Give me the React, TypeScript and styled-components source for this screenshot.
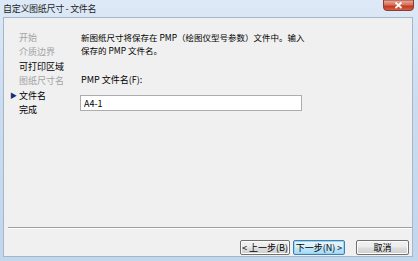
import React from "react";
import styled, { createGlobalStyle } from "styled-components";

const GlobalStyle = createGlobalStyle`
  html, body {
    margin: 0;
    padding: 0;
    background: #ffffff;
  }
  body {
    font-family: "Noto Sans CJK SC", "Liberation Sans", sans-serif;
  }
`;

interface Step {
  label: string;
  enabled: boolean;
  current?: boolean;
}

const steps: Step[] = [
  { label: "开始", enabled: false },
  { label: "介质边界", enabled: false },
  { label: "可打印区域", enabled: true },
  { label: "图纸尺寸名", enabled: false },
  { label: "文件名", enabled: true, current: true },
  { label: "完成", enabled: true },
];

const CloseIcon: React.FC = () => (
  <svg width="31" height="11" viewBox="0 0 31 11">
    <defs>
      <linearGradient id="closeGrad" x1="0" y1="0" x2="0" y2="1">
        <stop offset="0" stopColor="#eab3a2" />
        <stop offset="0.45" stopColor="#d8705a" />
        <stop offset="0.6" stopColor="#c43a22" />
        <stop offset="1" stopColor="#d4664e" />
      </linearGradient>
    </defs>
    <path d="M0.5 0 V7 Q0.5 10.5 4 10.5 H27 Q30.5 10.5 30.5 7 V0 Z" fill="url(#closeGrad)" stroke="#8e3b2e" />
    <path d="M12.5 2.5 L18.5 8 M18.5 2.5 L12.5 8" stroke="#ffffff" strokeWidth="1.7" />
  </svg>
);

const App: React.FC = () => {
  return (
    <>
      <GlobalStyle />
      <Window>
        <TitleBar>
          <Title>自定义图纸尺寸 - 文件名</Title>
          <CloseButton>
            <CloseIcon />
          </CloseButton>
        </TitleBar>
        <Client>
          <Body>
            <Nav>
              {steps.map((s) => (
                <NavItem key={s.label} $enabled={s.enabled}>
                  <Arrow>{s.current ? "▶" : ""}</Arrow>
                  {s.label}
                </NavItem>
              ))}
            </Nav>
            <Main>
              <Intro>
                <IntroLine>新图纸尺寸将保存在 PMP（绘图仪型号参数）文件中。输入</IntroLine>
                <IntroLine>保存的 PMP 文件名。</IntroLine>
              </Intro>
              <FieldLabel>PMP 文件名(F):</FieldLabel>
              <TextInput defaultValue="A4-1" />
            </Main>
          </Body>
          <Separator />
          <ButtonRow>
            <Button>&lt; 上一步(B)</Button>
            <Button $primary>下一步(N) &gt;</Button>
            <Button $wide>取消</Button>
          </ButtonRow>
        </Client>
      </Window>
    </>
  );
};

export default App;

const Window = styled.div`
  width: 418px;
  height: 261px;
  box-sizing: border-box;
  display: flex;
  flex-direction: column;
  background: linear-gradient(180deg, #dde9f6 0%, #cbdcef 40%, #c2d6ec 100%);
`;

const TitleBar = styled.div`
  height: 17px;
  display: flex;
  align-items: flex-start;
  justify-content: space-between;
  padding-left: 3px;
  padding-right: 4px;
`;

const Title = styled.div`
  font-size: 9px;
  line-height: 17px;
  color: #1e1e1e;
  letter-spacing: -0.3px;
`;

const CloseButton = styled.div`
  flex: 0 0 31px;
  height: 11px;
  line-height: 0;
`;

const Client = styled.div`
  flex: 1;
  margin: 0 5px 4px 3px;
  border: 1px solid #a6b6c9;
  background: #f0f0f0;
  display: flex;
  flex-direction: column;
`;

const Body = styled.div`
  flex: 1;
  display: grid;
  grid-template-columns: 77px 1fr;
  padding-top: 12px;
`;

const Nav = styled.div`
  display: flex;
  flex-direction: column;
`;

const NavItem = styled.div<{ $enabled: boolean }>`
  display: flex;
  align-items: center;
  font-size: 9px;
  height: 14.5px;
  color: ${(p) => (p.$enabled ? "#000000" : "#a3a3a3")};
`;

const Arrow = styled.span`
  width: 15px;
  padding-left: 6px;
  box-sizing: border-box;
  font-size: 7px;
  color: #1c2a78;
`;

const Main = styled.div`
  display: flex;
  flex-direction: column;
  align-items: flex-start;
`;

const Intro = styled.div`
  display: flex;
  flex-direction: column;
  margin-top: 1px;
`;

const IntroLine = styled.div`
  font-size: 8.5px;
  line-height: 12.5px;
  color: #000000;
  white-space: nowrap;
`;

const FieldLabel = styled.div`
  font-size: 9px;
  line-height: 11px;
  margin-top: 18px;
  color: #000000;
`;

const TextInput = styled.input`
  margin-top: 10px;
  margin-left: -1px;
  width: 222px;
  height: 16px;
  box-sizing: border-box;
  border: 1px solid #abadb3;
  background: #ffffff;
  padding: 0 3px;
  font-family: "Noto Sans CJK SC", "Liberation Sans", sans-serif;
  font-size: 9px;
  color: #000000;
  outline: none;
`;

const Separator = styled.div`
  margin: 0 0 0 4px;
  height: 0;
  border-top: 1px solid #a0a0a0;
  border-bottom: 1px solid #ffffff;
`;

const ButtonRow = styled.div`
  height: 27px;
  display: flex;
  justify-content: flex-end;
  align-items: flex-start;
  padding: 11px 3px 0 0;
  box-sizing: border-box;
  gap: 3px;
`;

const Button = styled.button<{ $primary?: boolean; $wide?: boolean }>`
  height: 15px;
  width: ${(p) => (p.$wide ? "53px" : p.$primary ? "52px" : "50px")};
  margin-left: ${(p) => (p.$wide ? "8px" : "0")};
  padding: 0;
  box-sizing: border-box;
  border: 1px solid ${(p) => (p.$primary ? "#3c7fb1" : "#707070")};
  border-radius: 2px;
  background: ${(p) =>
    p.$primary
      ? "linear-gradient(180deg, #eaf6fd 0%, #d9f0fc 45%, #bee6fd 55%, #a7d9f5 100%)"
      : "linear-gradient(180deg, #f2f2f2 0%, #ebebeb 45%, #dddddd 55%, #cfcfcf 100%)"};
  box-shadow: inset 0 0 0 1px ${(p) => (p.$primary ? "#9fd2ef" : "#fcfcfc")};
  font-family: "Noto Sans CJK SC", "Liberation Sans", sans-serif;
  font-size: 9px;
  line-height: 13px;
  color: #000000;
  white-space: nowrap;
`;
